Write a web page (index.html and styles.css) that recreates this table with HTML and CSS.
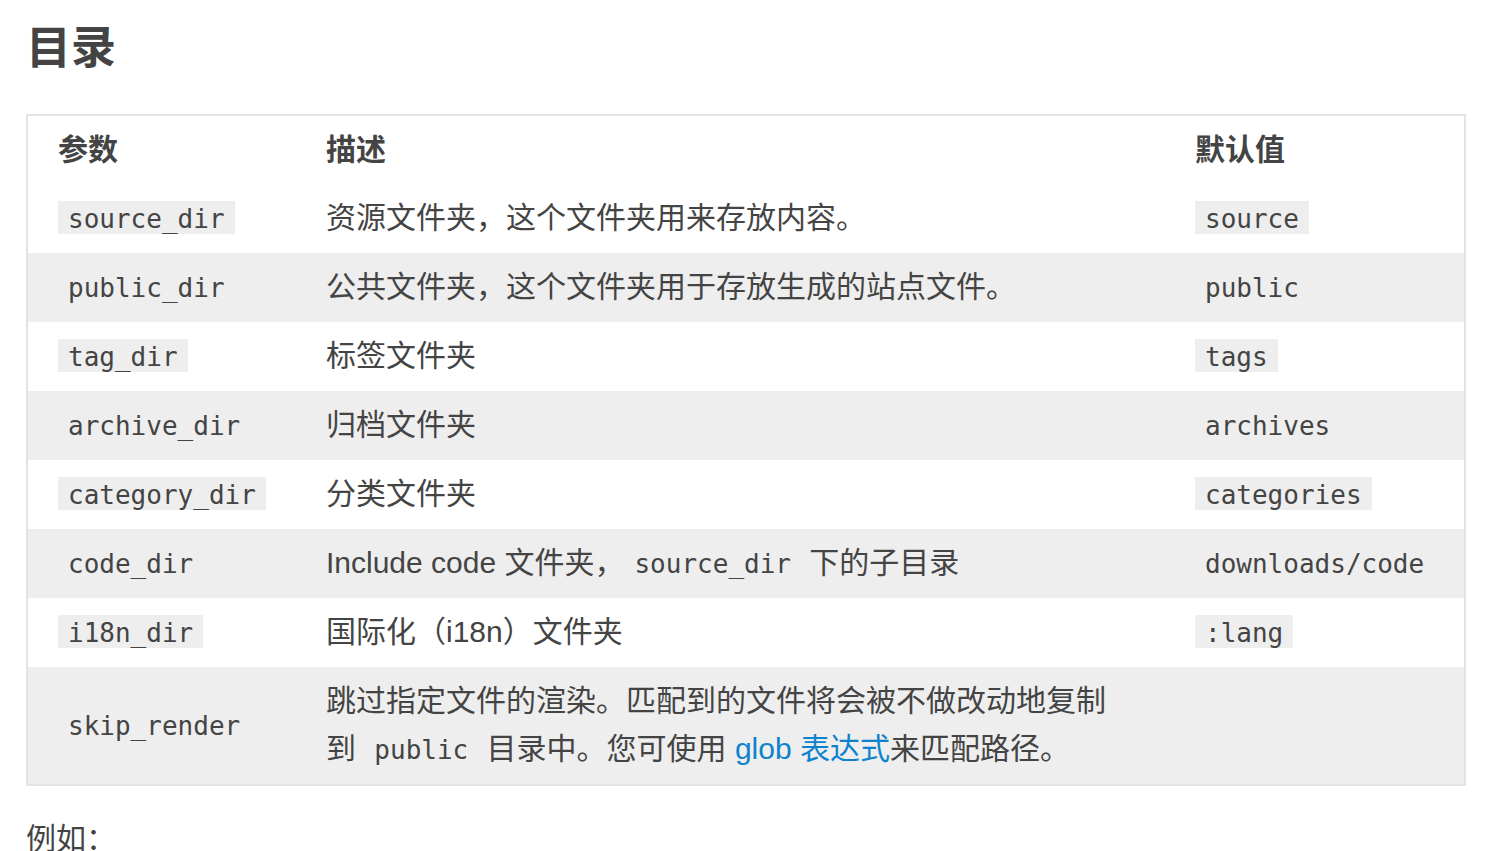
FILE: index.html
```html
<!DOCTYPE html>
<html lang="zh-CN">
<head>
<meta charset="utf-8">
<title>目录</title>
<link rel="stylesheet" href="styles.css">
</head>
<body>
<main class="article">
  <h1 class="title">目录</h1>
  <table class="config">
    <colgroup>
      <col class="col-param">
      <col class="col-desc">
      <col class="col-default">
    </colgroup>
    <thead>
      <tr><th>参数</th><th>描述</th><th>默认值</th></tr>
    </thead>
    <tbody>
      <tr><td><code>source_dir</code></td><td>资源文件夹，这个文件夹用来存放内容。</td><td><code>source</code></td></tr>
      <tr><td><code>public_dir</code></td><td>公共文件夹，这个文件夹用于存放生成的站点文件。</td><td><code>public</code></td></tr>
      <tr><td><code>tag_dir</code></td><td>标签文件夹</td><td><code>tags</code></td></tr>
      <tr><td><code>archive_dir</code></td><td>归档文件夹</td><td><code>archives</code></td></tr>
      <tr><td><code>category_dir</code></td><td>分类文件夹</td><td><code>categories</code></td></tr>
      <tr><td><code>code_dir</code></td><td>Include code 文件夹，<code>source_dir</code> 下的子目录</td><td><code>downloads/code</code></td></tr>
      <tr><td><code>i18n_dir</code></td><td>国际化（i18n）文件夹</td><td><code>:lang</code></td></tr>
      <tr><td><code>skip_render</code></td><td>跳过指定文件的渲染。匹配到的文件将会被不做改动地复制到 <code>public</code> 目录中。您可使用 <a href="#glob">glob 表达式</a>来匹配路径。</td><td></td></tr>
    </tbody>
  </table>
  <p class="para">例如：</p>
</main>
</body>
</html>
```

FILE: styles.css
```css
html, body {
  margin: 0;
  padding: 0;
  background: #fff;
}

body {
  color: #444;
  font-family: "Liberation Sans", "Noto Sans CJK SC", sans-serif;
  font-size: 30px;
  line-height: 48px;
}

.article {
  padding: 15px 30px 0 26px;
}

.title {
  margin: 0 0 39px 0;
  font-family: "Noto Sans CJK SC", sans-serif;
  font-size: 45px;
  line-height: 60px;
  font-weight: bold;
  color: #444;
}

.config {
  width: 100%;
  box-sizing: border-box;
  table-layout: fixed;
  border: 2px solid #e3e3e3;
  border-collapse: separate;
  border-spacing: 0;
}

.col-param { width: 268px; }
.col-desc { width: 869px; }

.config th,
.config td {
  padding: 10px 40px 11px 30px;
  text-align: left;
  vertical-align: middle;
}

.config th {
  padding-bottom: 10px;
  font-weight: bold;
}

.config tbody tr:nth-child(even) {
  background: #eee;
}

code {
  font-family: "DejaVu Sans Mono", monospace;
  font-size: 26px;
  line-height: 1;
  padding: 3px 10px 0;
  background: #eee;
  color: #444;
}

a {
  color: #0e83cd;
  text-decoration: none;
}

.para {
  margin: 29px 0 0 0;
}
```
